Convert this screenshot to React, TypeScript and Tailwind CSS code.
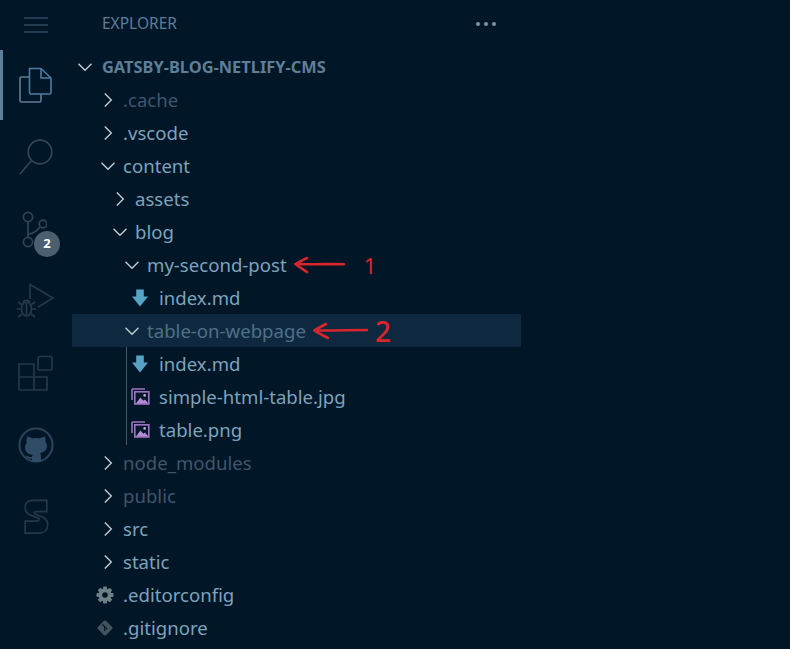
const BODY = "[font-family:'Noto_Sans','Open_Sans',sans-serif]";

function Chevron({ open }: { open?: boolean }) {
  return (
    <svg width="16" height="16" viewBox="0 0 16 16" fill="none" stroke="#c3ccd3" strokeWidth="1.4" className="shrink-0">
      {open ? <path d="M1.5 4.8 8 11.3l6.5-6.5" /> : <path d="M4.8 1.5 11.3 8l-6.5 6.5" />}
    </svg>
  );
}

function MdIcon() {
  return (
    <svg width="16" height="18" viewBox="0 0 16 18" className="shrink-0">
      <path d="M4.2 0.5h7.6v7H16L8 17.500 0 7.500h4.200z" fill="#56a3c6" />
    </svg>
  );
}

function ImageIcon() {
  return (
    <svg width="19" height="17" viewBox="0 0 19 17" className="shrink-0">
      <path d="M1 1h13M1 1v11" stroke="#a074c4" strokeWidth="1.6" fill="none" />
      <rect x="3.8" y="3.8" width="14" height="12.2" fill="#07172a" stroke="#a074c4" strokeWidth="1.6" />
      <circle cx="13.6" cy="7.4" r="1.3" fill="#c9a6e4" />
      <path d="M5 15.400 9.400 9.600l3 3.200 1.600-1.200 3.400 3.800z" fill="#b58ad6" />
    </svg>
  );
}

function GearIcon() {
  return (
    <svg width="18" height="18" viewBox="0 0 18 18" className="shrink-0">
      <g fill="#6d8086">
        <rect x="7" y="0.5" width="4" height="17" rx="1" />
        <rect x="7" y="0.5" width="4" height="17" rx="1" transform="rotate(45 9 9)" />
        <rect x="7" y="0.5" width="4" height="17" rx="1" transform="rotate(90 9 9)" />
        <rect x="7" y="0.5" width="4" height="17" rx="1" transform="rotate(135 9 9)" />
        <circle cx="9" cy="9" r="6.4" />
      </g>
      <circle cx="9" cy="9" r="2.8" fill="#011627" />
    </svg>
  );
}

function GitIcon() {
  return (
    <svg width="18" height="18" viewBox="0 0 18 18" className="shrink-0">
      <rect x="3.2" y="3.2" width="11.6" height="11.6" rx="1.4" fill="#41535b" transform="rotate(45 9 9)" />
      <path d="M6.400 5.400 11 10M8.600 8v4" stroke="#011627" strokeWidth="1.1" />
    </svg>
  );
}

function ArrowOne() {
  return (
    <svg width="52" height="18" viewBox="0 0 52 18" fill="none" stroke="#d8262c" strokeWidth="2.6" strokeLinecap="round" className="shrink-0">
      <path d="M50 8.200 C 36 8 16 8.400 2 8" />
      <path d="M13 2 C 9 4 5 6 1.600 8 C 5 11 9 13 13 16" />
    </svg>
  );
}

function ArrowTwo() {
  return (
    <svg width="56" height="18" viewBox="0 0 56 18" fill="none" stroke="#d8262c" strokeWidth="2.6" strokeLinecap="round" className="shrink-0">
      <path d="M54 8 C 38 8 18 8.600 2 8.400" />
      <path d="M13 2 C 9 4 5 6 1.600 8.400 C 5 11 10 13.500 15 16" />
    </svg>
  );
}

type Row = {
  label: string;
  indent: string;
  icon: "closed" | "open" | "md" | "image" | "gear" | "git";
  gap: string;
  tone: string;
  note?: 1 | 2;
  active?: boolean;
};

const rows: Row[] = [
  { label: ".cache", indent: "pl-[28px]", icon: "closed", gap: "gap-[7px]", tone: "text-[#3f566c]" },
  { label: ".vscode", indent: "pl-[28px]", icon: "closed", gap: "gap-[7px]", tone: "text-[#7ea3bc]" },
  { label: "content", indent: "pl-[28px]", icon: "open", gap: "gap-[7px]", tone: "text-[#7ea3bc]" },
  { label: "assets", indent: "pl-[40px]", icon: "closed", gap: "gap-[7px]", tone: "text-[#7ea3bc]" },
  { label: "blog", indent: "pl-[40px]", icon: "open", gap: "gap-[7px]", tone: "text-[#7ea3bc]" },
  { label: "my-second-post", indent: "pl-[52px]", icon: "open", gap: "gap-[7px]", tone: "text-[#7ea3bc]", note: 1 },
  { label: "index.md", indent: "pl-[60px]", icon: "md", gap: "gap-[11px]", tone: "text-[#7ea3bc]" },
  { label: "table-on-webpage", indent: "pl-[52px]", icon: "open", gap: "gap-[7px]", tone: "text-[#4f7089]", note: 2, active: true },
  { label: "index.md", indent: "pl-[60px]", icon: "md", gap: "gap-[11px]", tone: "text-[#7ea3bc]" },
  { label: "simple-html-table.jpg", indent: "pl-[59px]", icon: "image", gap: "gap-[9px]", tone: "text-[#7ea3bc]" },
  { label: "table.png", indent: "pl-[59px]", icon: "image", gap: "gap-[9px]", tone: "text-[#7ea3bc]" },
  { label: "node_modules", indent: "pl-[28px]", icon: "closed", gap: "gap-[7px]", tone: "text-[#3f566c]" },
  { label: "public", indent: "pl-[28px]", icon: "closed", gap: "gap-[7px]", tone: "text-[#3f566c]" },
  { label: "src", indent: "pl-[28px]", icon: "closed", gap: "gap-[7px]", tone: "text-[#7ea3bc]" },
  { label: "static", indent: "pl-[28px]", icon: "closed", gap: "gap-[7px]", tone: "text-[#7ea3bc]" },
  { label: ".editorconfig", indent: "pl-[24px]", icon: "gear", gap: "gap-[9px]", tone: "text-[#7ea3bc]" },
  { label: ".gitignore", indent: "pl-[24px]", icon: "git", gap: "gap-[9px]", tone: "text-[#7ea3bc]" },
];

function RowIcon({ icon }: { icon: Row["icon"] }) {
  if (icon === "closed") return <Chevron />;
  if (icon === "open") return <Chevron open />;
  if (icon === "md") return <MdIcon />;
  if (icon === "image") return <ImageIcon />;
  if (icon === "gear") return <GearIcon />;
  return <GitIcon />;
}

function ActivityBar() {
  return (
    <div className="w-[72px] shrink-0 flex flex-col">
      <div className="h-[49px] flex items-center justify-center">
        <svg width="24" height="16" viewBox="0 0 24 16" stroke="#2f485f" strokeWidth="1.5">
          <path d="M0 1h24M0 8h24M0 15h24" />
        </svg>
      </div>
      <div className="relative h-[72px] flex items-center justify-center">
        <div className="absolute left-0 top-[1px] bottom-[1px] w-[3px] bg-[#5f7e97]" />
        <svg width="34" height="36" viewBox="0 0 34 36" fill="none" stroke="#5f7e97" strokeWidth="1.6">
          <path d="M10.500 1.500h11.500l10 9.500v14.500a1.500 1.500 0 0 1-1.500 1.500H12a1.500 1.500 0 0 1-1.500-1.500z" stroke="#4f7ba3" />
          <path d="M22 1.500V11h10" stroke="#4f7ba3" />
          <path d="M10.500 10H2.500A1.500 1.500 0 0 0 1 11.500v22A1.500 1.500 0 0 0 2.500 35h18a1.500 1.500 0 0 0 1.500-1.500V27" />
        </svg>
      </div>
      <div className="h-[72px] flex items-center justify-center">
        <svg width="34" height="36" viewBox="0 0 34 36" fill="none" stroke="#2f4559" strokeWidth="1.7">
          <circle cx="21" cy="13" r="11.8" />
          <path d="M12.500 21.500 1 35" />
        </svg>
      </div>
      <div className="relative h-[72px] flex items-center justify-center">
        <svg width="28" height="38" viewBox="0 0 28 38" fill="none" stroke="#2f4559" strokeWidth="1.7" className="-translate-x-[3px]">
          <circle cx="9" cy="7" r="4.6" />
          <circle cx="24" cy="14" r="3.8" />
          <circle cx="9" cy="32" r="4.6" />
          <path d="M9 11.600v15.800M9 24c6 0 9-3 12-7" />
        </svg>
        <div className="absolute left-[34px] top-[38px] w-[26px] h-[26px] rounded-full bg-[#4b5f70] flex items-center justify-center text-white text-[13px] font-bold font-['Noto_Sans']">
          2
        </div>
      </div>
      <div className="h-[72px] flex items-center justify-center">
        <svg width="38" height="36" viewBox="0 0 38 36" fill="none" stroke="#24394d" strokeWidth="1.7">
          <path d="M13 16V1.500L36 15 21 24" />
          <ellipse cx="9.500" cy="26" rx="5" ry="7" />
          <path d="M6 19.500c1-3 6-3 7 0M1 19l4 3M18 19l-4 3M0 26h4.500M15 26h4M1 34l4-3M18 34l-4-3M9.500 20v13" />
        </svg>
      </div>
      <div className="h-[72px] flex items-center justify-center">
        <svg width="36" height="36" viewBox="0 0 36 36" fill="none" stroke="#24394d" strokeWidth="1.7">
          <rect x="20" y="1.500" width="14" height="13.500" rx="1.500" />
          <path d="M1 9h15v26H2.500A1.500 1.500 0 0 1 1 33.500zM1 22h28v13H16M16 9v13" />
        </svg>
      </div>
      <div className="h-[72px] flex items-center justify-center">
        <svg width="36" height="36" viewBox="0 0 36 36">
          <circle cx="18" cy="18" r="16.500" fill="none" stroke="#2a4259" strokeWidth="2.2" />
          <path d="M9 9.500c2 0 4 1 5 2 2.500-.7 5.500-.7 8 0 1-1 3-2 5-2 .7 2 .7 3.500.3 5 1.200 1.400 1.700 3 1.700 4.500 0 4.500-3 6.500-7 7 .8.8 1 2 1 3.500v5.500H14v-3.500c-3 .6-5-.4-6-3 2 .5 3 2 6 1.500 0-.8.2-1.500.8-2-4-.5-7.800-2.500-7.800-7.500 0-1.500.5-3 1.700-4.500-.4-1.500-.4-3 .3-5z" fill="#2f4c66" />
        </svg>
      </div>
      <div className="h-[72px] flex items-center justify-center">
        <svg width="28" height="36" viewBox="0 0 28 40" fill="none" stroke="#24394d" strokeWidth="1.9">
          <path d="M26 1.500H10C4 1.500 2 5 2 9.500c0 5 3 7.500 7 9l7 2.500c2 .8 2 3.500-.500 3.500H2v13.500h15c6 0 10-3.500 10-9.500 0-5-3-7.500-7-9l-6.500-2.500c-2-.8-2-3 .5-3H26z" />
        </svg>
      </div>
    </div>
  );
}

export default function App() {
  return (
    <div className={`w-[790px] h-[649px] overflow-hidden flex bg-[#011627] ${BODY}`}>
      <ActivityBar />
      <div className="w-[449px] shrink-0">
        <div className="h-[50px] pl-[30px] pr-[25px] pb-[2px] flex items-center justify-between">
          <span className="text-[15.500px] text-[#5f7e97]">EXPLORER</span>
          <div className="flex gap-[4px]">
            <span className="w-[4px] h-[4px] rounded-full bg-[#7c93a6]" />
            <span className="w-[4px] h-[4px] rounded-full bg-[#7c93a6]" />
            <span className="w-[4px] h-[4px] rounded-full bg-[#7c93a6]" />
          </div>
        </div>
        <div className="relative">
          <div className="h-[33px] pl-[5px] flex items-center gap-[9px]">
            <Chevron open />
            <span className="text-[16.400px] font-bold text-[#5f7e97] whitespace-nowrap pt-[2px]">GATSBY-BLOG-NETLIFY-CMS</span>
          </div>
          {rows.map((row, i) => (
            <div
              key={i}
              className={`h-[33px] ${row.indent} flex items-center ${row.gap} text-[18.600px] ${row.active ? "bg-[#0e293f]" : ""}`}
            >
              <RowIcon icon={row.icon} />
              <span className={`${row.tone} whitespace-nowrap`}>{row.label}</span>
              {row.note === 1 && (
                <div className="flex items-center">
                  <ArrowOne />
                  <span className="ml-[18px] text-[22px] leading-none text-[#d8262c]">1</span>
                </div>
              )}
              {row.note === 2 && (
                <div className="flex items-center">
                  <ArrowTwo />
                  <span className="ml-[6px] text-[28px] leading-none text-[#d8262c] font-medium">2</span>
                </div>
              )}
            </div>
          ))}
          {/* indent guide for the open folder */}
          <div className="absolute left-[54px] top-[297px] w-px h-[98px] bg-[#4b5a66]" />
        </div>
      </div>
    </div>
  );
}
